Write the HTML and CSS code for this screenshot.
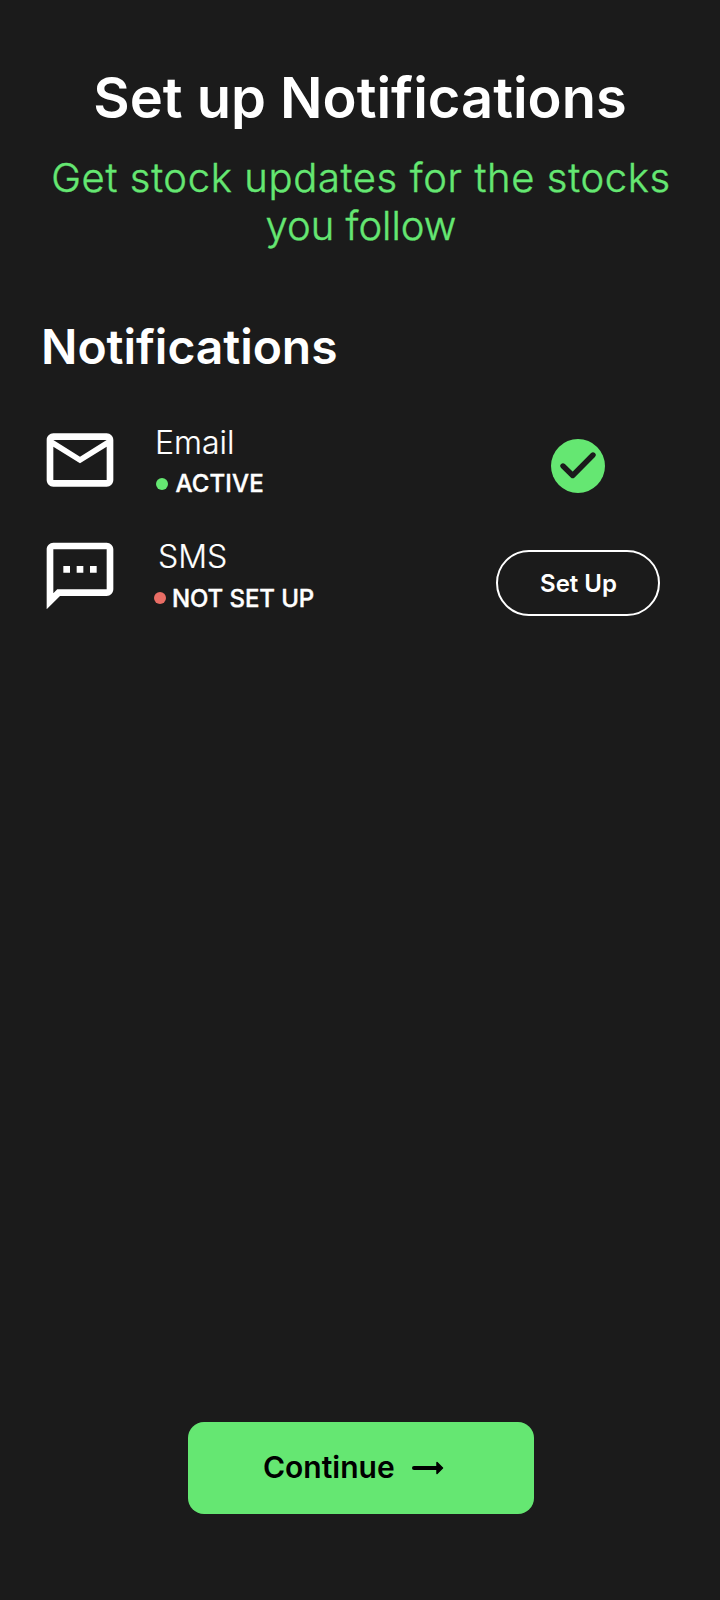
FILE: index.html
```
<!DOCTYPE html>
<html lang="en">
<head>
<meta charset="utf-8">
<title>Set up Notifications</title>
<link rel="stylesheet" href="styles.css">
</head>
<body>
<main class="screen">
  <h1 class="title">Set up Notifications</h1>
  <p class="subtitle"><span class="subtitle-lead">Get stock updates for the stocks</span><br>you follow</p>
  <h2 class="heading">Notifications</h2>
  <ul class="channels">
    <li class="channel channel-email">
      <svg class="icon" viewBox="0 0 24 24"><path fill="currentColor" d="M22 6c0-1.100-.9-2-2-2H4c-1.100 0-2 .9-2 2v12c0 1.100.9 2 2 2h16c1.100 0 2-.9 2-2V6zm-2 0l-8 5-8-5h16zm0 12H4V8l8 5 8-5v10z"/></svg>
      <div class="info">
        <div class="name">Email</div>
        <div class="status"><span class="dot"></span>ACTIVE</div>
      </div>
      <div class="action"><svg class="check" viewBox="0 0 54 54"><circle cx="27" cy="27" r="27" fill="#65e772"/><path d="M12 27l9.700 9.500L42 16" fill="none" stroke="#1b1b1b" stroke-width="5.400" stroke-linecap="round" stroke-linejoin="round"/></svg></div>
    </li>
    <li class="channel channel-sms">
      <svg class="icon" viewBox="0 0 24 24"><path fill="currentColor" d="M20 2H4c-1.100 0-2 .9-2 2v18l4-4h14c1.100 0 2-.9 2-2V4c0-1.100-.9-2-2-2zm0 14H5.170L4 17.170V4h16v12zM7 9h2v2H7zm4 0h2v2h-2zm4 0h2v2h-2z"/></svg>
      <div class="info">
        <div class="name">SMS</div>
        <div class="status"><span class="dot"></span>NOT SET UP</div>
      </div>
      <div class="action"><button class="setup">Set Up</button></div>
    </li>
  </ul>
  <button class="continue">Continue<svg class="arrow" viewBox="0 0 32 14"><path d="M2 7H26" stroke="#000" stroke-width="4" stroke-linecap="round"/><path d="M25 1.500L30.500 7 25 12.500z" fill="#000" stroke="#000" stroke-width="1.500" stroke-linejoin="round"/></svg></button>
</main>
</body>
</html>
```
FILE: styles.css
```
* { box-sizing: border-box; margin: 0; padding: 0; }
body { background: #1b1b1b; color: #fff; font-family: Inter, sans-serif; }
.screen { width: 720px; height: 1600px; padding: 64px 40px 86px; display: flex; flex-direction: column; }
.title { font-size: 56px; font-weight: 600; line-height: 68px; text-align: center; }
.subtitle { margin-top: 22px; padding-left: 2px; font-size: 40px; font-weight: 300; line-height: 48px; text-align: center; color: #65e772; white-space: nowrap; -webkit-text-stroke: 0.4px currentColor; }
.subtitle-lead { letter-spacing: 0.63px; }
.heading { margin: 68px 0 0 1px; font-size: 48px; font-weight: 600; line-height: 58px; letter-spacing: -0.05px; }
.channels { list-style: none; margin-top: 44px; }
.channel { display: flex; height: 114px; }
.icon { width: 80px; height: 80px; }
.info { width: 300px; margin-left: 34px; padding-top: 3px; }
.name { font-size: 32px; font-weight: 300; line-height: 39px; -webkit-text-stroke: 0.2px currentColor; }
.status { display: flex; align-items: center; font-size: 24px; font-weight: 500; line-height: 29px; margin-top: 7px; -webkit-text-stroke: 0.4px currentColor; }
.dot { width: 12px; height: 12px; border-radius: 50%; background: #65e772; margin-right: 8px; }
.action { width: 164px; margin-left: 42px; display: flex; justify-content: center; align-items: flex-start; }
.check { width: 54px; height: 54px; margin-top: 19px; }
.channel-email .name { padding-left: 1px; }
.channel-email .status { padding-left: 1.5px; letter-spacing: 0.15px; }
.channel-sms .icon { margin-top: 2px; }
.channel-sms .name { padding-left: 4px; }
.channel-sms .status { margin-top: 8px; letter-spacing: -0.1px; }
.channel-sms .dot { background: #e96d65; margin: 0 6px 2px 0; }
.setup { margin-top: 16px; width: 164px; height: 66px; padding-left: 1px; border: 2px solid #fff; border-radius: 33px; background: none; color: #fff; font: 600 24px Inter, sans-serif; }
.continue { width: 346px; height: 92px; margin: auto 146px 0 148px; padding: 0 0 2px 75px; display: flex; align-items: center; border: 0; border-radius: 16px; background: #65e772; color: #000; font: 600 30px Inter, sans-serif; }
.arrow { width: 32px; height: 14px; margin: 2px 0 0 17px; }
```
